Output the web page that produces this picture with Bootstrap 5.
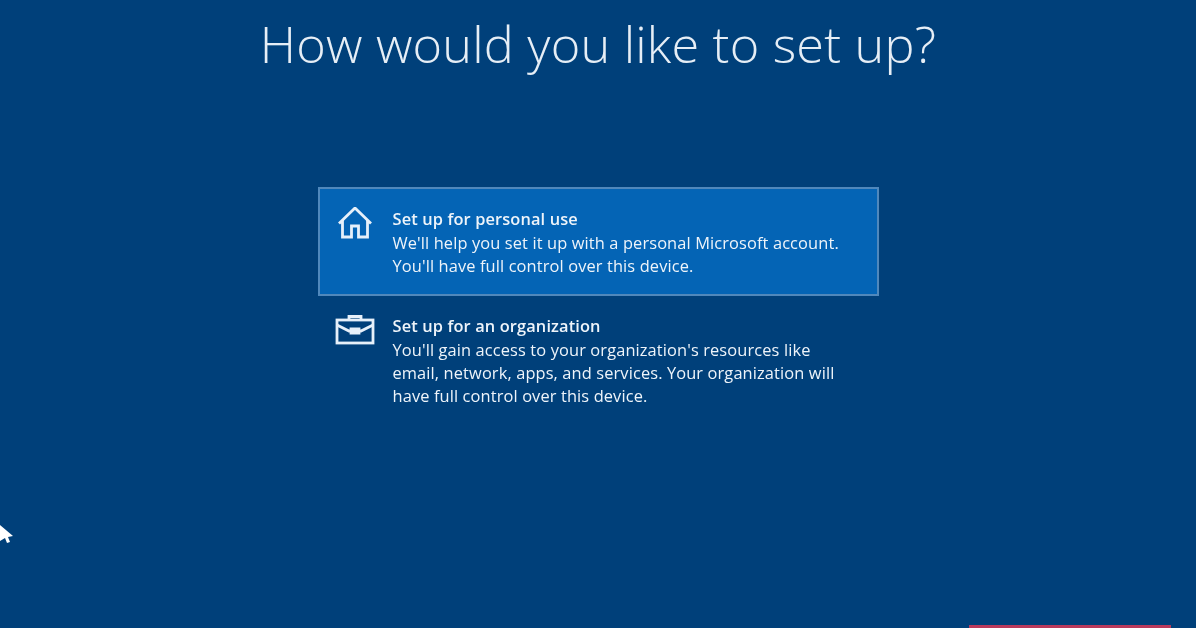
<!DOCTYPE html>
<html lang="en">
<head>
<meta charset="utf-8">
<title>How would you like to set up?</title>
<link href="https://cdn.jsdelivr.net/npm/bootstrap@5.3.0/dist/css/bootstrap.min.css" rel="stylesheet">
<style>
html, body { height: 100%; }
body { background: #00407a; color: #fff; overflow: hidden; font-family: "Open Sans", "Noto Sans", sans-serif; }
.stage { height: 628px; position: relative; filter: blur(.6px); }
.headline { font-family: "Open Sans", sans-serif; font-weight: 300; font-size: 50.4px; line-height: 64px; padding-top: 12px; margin: 0; color: #e6eef6; letter-spacing: .2px; }
.choices { width: 561px; margin-top: 111px; }
.choice { display: flex; font-size: 16.4px; line-height: 23.3px; padding: 19px 10px 0 17px; color: #eef4fa; }
.choice-on { background: #0464b5; border: 2px solid #5088bc; height: 109px; padding-left: 15px; padding-top: 19px; }
.choice-off { padding-top: 19px; }
.choice-icon { width: 58px; flex: none; }
.choice-on .choice-icon svg { margin-left: 1px; margin-top: -1px; }
.choice-title { font-weight: 600; }
.choice-text { letter-spacing: .12px; white-space: nowrap; margin-top: -.6px; }
.corner-btn { position: absolute; left: 969px; top: 625px; width: 202px; height: 30px; background: #b93a5c; }
.pointer { position: absolute; left: 0; top: 522px; }
</style>
</head>
<body>
<div class="stage">
  <h1 class="headline text-center">How would you like to set up?</h1>
  <div class="choices mx-auto">
    <div class="choice choice-on">
      <div class="choice-icon">
        <svg width="36" height="34" viewBox="0 0 36 34" fill="none" stroke="#e6f0fa" stroke-width="2.8"><path d="M3 16.5 19 1l16 15.5M6.500 13v17h9V19h7v11h9V13"/></svg>
      </div>
      <div class="choice-text">
        <div class="choice-title">Set up for personal use</div>
        <div>We'll help you set it up with a personal Microsoft account.</div>
        <div>You'll have full control over this device.</div>
      </div>
    </div>
    <div class="choice choice-off">
      <div class="choice-icon">
        <svg width="40" height="30" viewBox="0 0 40 30" fill="none" stroke="#e6f0fa" stroke-width="2.8"><path d="M14 5V1.500h12V5"/><rect x="2" y="5" width="36" height="23"/><path d="M2 10l12 6h12l12-6"/><path d="M16 14h8v4h-8z" fill="#e6f0fa"/></svg>
      </div>
      <div class="choice-text">
        <div class="choice-title">Set up for an organization</div>
        <div>You'll gain access to your organization's resources like</div>
        <div>email, network, apps, and services. Your organization will</div>
        <div>have full control over this device.</div>
      </div>
    </div>
  </div>
  <svg class="pointer" width="14" height="24" viewBox="0 0 14 24"><path d="M0 3l13 11-5 1 2 5-3 1-2-5-5 3z" fill="#fff"/></svg>
  <div class="corner-btn"></div>
</div>
<script src="https://cdn.jsdelivr.net/npm/bootstrap@5.3.0/dist/js/bootstrap.bundle.min.js"></script>
</body>
</html>
